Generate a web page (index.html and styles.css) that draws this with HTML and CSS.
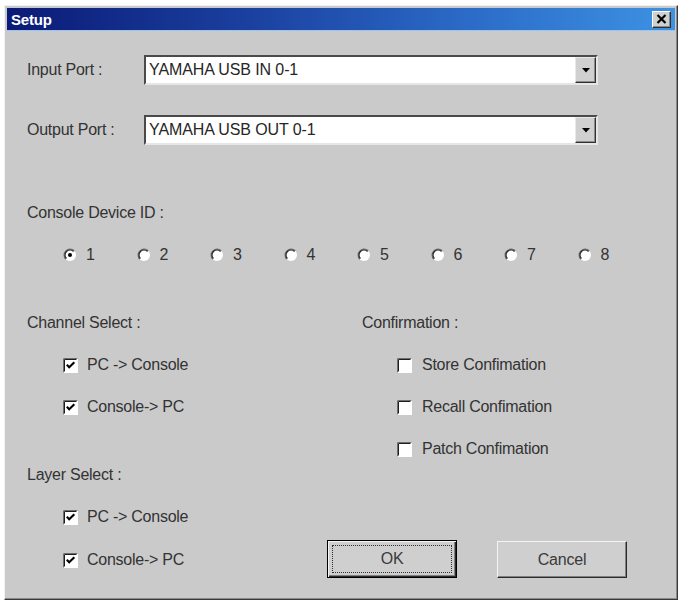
FILE: index.html
```html
<!DOCTYPE html>
<html>
<head>
<meta charset="utf-8">
<link rel="stylesheet" href="styles.css">
</head>
<body>
<div class="window">
  <div class="titlebar">
    <span class="title">Setup</span>
    <span class="close"><svg width="11" height="10" viewBox="0 0 11 10"><path d="M1.5 1 L9.5 9 M9.5 1 L1.5 9" stroke="#000" stroke-width="2.2" fill="none"/></svg></span>
  </div>
  <div class="content">
    <div class="port-row first">
      <span class="label port-label">Input Port :</span>
      <div class="combo">
        <span class="combo-text">YAMAHA USB IN 0-1</span>
        <span class="drop"><svg width="8" height="5" viewBox="0 0 8 5"><polygon points="0,0 8,0 4,4.5" fill="#000"/></svg></span>
      </div>
    </div>
    <div class="port-row second">
      <span class="label port-label">Output Port :</span>
      <div class="combo">
        <span class="combo-text">YAMAHA USB OUT 0-1</span>
        <span class="drop"><svg width="8" height="5" viewBox="0 0 8 5"><polygon points="0,0 8,0 4,4.5" fill="#000"/></svg></span>
      </div>
    </div>

    <div class="label device-label">Console Device ID :</div>
    <div class="radios">
      <span class="radio"><svg width="14" height="14" viewBox="0 0 14 14"><circle cx="7" cy="7" r="6" fill="#fff"/><path d="M2.76 11.24 A6 6 0 0 1 11.24 2.76" stroke="#6e6e6e" stroke-width="1.2" fill="none"/><path d="M3.46 10.54 A5 5 0 0 1 10.54 3.46" stroke="#262626" stroke-width="1.2" fill="none"/><circle cx="7" cy="7" r="2" fill="#000"/></svg><span class="rlabel">1</span></span>
      <span class="radio"><svg width="14" height="14" viewBox="0 0 14 14"><circle cx="7" cy="7" r="6" fill="#fff"/><path d="M2.76 11.24 A6 6 0 0 1 11.24 2.76" stroke="#6e6e6e" stroke-width="1.2" fill="none"/><path d="M3.46 10.54 A5 5 0 0 1 10.54 3.46" stroke="#262626" stroke-width="1.2" fill="none"/></svg><span class="rlabel">2</span></span>
      <span class="radio"><svg width="14" height="14" viewBox="0 0 14 14"><circle cx="7" cy="7" r="6" fill="#fff"/><path d="M2.76 11.24 A6 6 0 0 1 11.24 2.76" stroke="#6e6e6e" stroke-width="1.2" fill="none"/><path d="M3.46 10.54 A5 5 0 0 1 10.54 3.46" stroke="#262626" stroke-width="1.2" fill="none"/></svg><span class="rlabel">3</span></span>
      <span class="radio"><svg width="14" height="14" viewBox="0 0 14 14"><circle cx="7" cy="7" r="6" fill="#fff"/><path d="M2.76 11.24 A6 6 0 0 1 11.24 2.76" stroke="#6e6e6e" stroke-width="1.2" fill="none"/><path d="M3.46 10.54 A5 5 0 0 1 10.54 3.46" stroke="#262626" stroke-width="1.2" fill="none"/></svg><span class="rlabel">4</span></span>
      <span class="radio"><svg width="14" height="14" viewBox="0 0 14 14"><circle cx="7" cy="7" r="6" fill="#fff"/><path d="M2.76 11.24 A6 6 0 0 1 11.24 2.76" stroke="#6e6e6e" stroke-width="1.2" fill="none"/><path d="M3.46 10.54 A5 5 0 0 1 10.54 3.46" stroke="#262626" stroke-width="1.2" fill="none"/></svg><span class="rlabel">5</span></span>
      <span class="radio"><svg width="14" height="14" viewBox="0 0 14 14"><circle cx="7" cy="7" r="6" fill="#fff"/><path d="M2.76 11.24 A6 6 0 0 1 11.24 2.76" stroke="#6e6e6e" stroke-width="1.2" fill="none"/><path d="M3.46 10.54 A5 5 0 0 1 10.54 3.46" stroke="#262626" stroke-width="1.2" fill="none"/></svg><span class="rlabel">6</span></span>
      <span class="radio"><svg width="14" height="14" viewBox="0 0 14 14"><circle cx="7" cy="7" r="6" fill="#fff"/><path d="M2.76 11.24 A6 6 0 0 1 11.24 2.76" stroke="#6e6e6e" stroke-width="1.2" fill="none"/><path d="M3.46 10.54 A5 5 0 0 1 10.54 3.46" stroke="#262626" stroke-width="1.2" fill="none"/></svg><span class="rlabel">7</span></span>
      <span class="radio"><svg width="14" height="14" viewBox="0 0 14 14"><circle cx="7" cy="7" r="6" fill="#fff"/><path d="M2.76 11.24 A6 6 0 0 1 11.24 2.76" stroke="#6e6e6e" stroke-width="1.2" fill="none"/><path d="M3.46 10.54 A5 5 0 0 1 10.54 3.46" stroke="#262626" stroke-width="1.2" fill="none"/></svg><span class="rlabel">8</span></span>
    </div>

    <div class="lower">
      <div class="left-col">
        <div class="label group-label">Channel Select :</div>
        <div class="check"><svg class="box" width="15" height="15" viewBox="0 0 15 15"><rect x="0" y="0" width="15" height="15" fill="#fff"/><path d="M0.5 14.5 V0.5 H14.5" stroke="#6e6e6e" fill="none"/><path d="M1.5 13.5 V1.5 H13.5" stroke="#1e1e1e" fill="none"/><path d="M3.8 6.8 L6.2 9.3 L11.3 4.2" stroke="#000" stroke-width="2.1" fill="none"/></svg><span class="clabel">PC -&gt; Console</span></div>
        <div class="check"><svg class="box" width="15" height="15" viewBox="0 0 15 15"><rect x="0" y="0" width="15" height="15" fill="#fff"/><path d="M0.5 14.5 V0.5 H14.5" stroke="#6e6e6e" fill="none"/><path d="M1.5 13.5 V1.5 H13.5" stroke="#1e1e1e" fill="none"/><path d="M3.8 6.8 L6.2 9.3 L11.3 4.2" stroke="#000" stroke-width="2.1" fill="none"/></svg><span class="clabel">Console-&gt; PC</span></div>
        <div class="label group-label layer">Layer Select :</div>
        <div class="check"><svg class="box" width="15" height="15" viewBox="0 0 15 15"><rect x="0" y="0" width="15" height="15" fill="#fff"/><path d="M0.5 14.5 V0.5 H14.5" stroke="#6e6e6e" fill="none"/><path d="M1.5 13.5 V1.5 H13.5" stroke="#1e1e1e" fill="none"/><path d="M3.8 6.8 L6.2 9.3 L11.3 4.2" stroke="#000" stroke-width="2.1" fill="none"/></svg><span class="clabel">PC -&gt; Console</span></div>
        <div class="check last"><svg class="box" width="15" height="15" viewBox="0 0 15 15"><rect x="0" y="0" width="15" height="15" fill="#fff"/><path d="M0.5 14.5 V0.5 H14.5" stroke="#6e6e6e" fill="none"/><path d="M1.5 13.5 V1.5 H13.5" stroke="#1e1e1e" fill="none"/><path d="M3.8 6.8 L6.2 9.3 L11.3 4.2" stroke="#000" stroke-width="2.1" fill="none"/></svg><span class="clabel">Console-&gt; PC</span></div>
      </div>
      <div class="right-col">
        <div class="label group-label conf">Confirmation :</div>
        <div class="check rcheck"><svg class="box" width="15" height="15" viewBox="0 0 15 15"><rect x="0" y="0" width="15" height="15" fill="#fff"/><path d="M0.5 14.5 V0.5 H14.5" stroke="#6e6e6e" fill="none"/><path d="M1.5 13.5 V1.5 H13.5" stroke="#1e1e1e" fill="none"/></svg><span class="clabel">Store Confimation</span></div>
        <div class="check rcheck"><svg class="box" width="15" height="15" viewBox="0 0 15 15"><rect x="0" y="0" width="15" height="15" fill="#fff"/><path d="M0.5 14.5 V0.5 H14.5" stroke="#6e6e6e" fill="none"/><path d="M1.5 13.5 V1.5 H13.5" stroke="#1e1e1e" fill="none"/></svg><span class="clabel">Recall Confimation</span></div>
        <div class="check rcheck"><svg class="box" width="15" height="15" viewBox="0 0 15 15"><rect x="0" y="0" width="15" height="15" fill="#fff"/><path d="M0.5 14.5 V0.5 H14.5" stroke="#6e6e6e" fill="none"/><path d="M1.5 13.5 V1.5 H13.5" stroke="#1e1e1e" fill="none"/></svg><span class="clabel">Patch Confimation</span></div>
        <div class="buttons">
          <button class="btn ok">OK</button>
          <button class="btn cancel">Cancel</button>
        </div>
      </div>
    </div>
  </div>
</div>
</body>
</html>
```
FILE: styles.css
```css
html, body {
  margin: 0;
  padding: 0;
  background: #ffffff;
}
body {
  font-family: "Liberation Sans", Arial, sans-serif;
}
.window {
  margin: 5px 0 0 4px;
  width: 674px;
  height: 595px;
  box-sizing: border-box;
  background: #cacaca;
  border: 1px solid;
  border-color: #f2f2f2 #3a3a3a #3a3a3a #f2f2f2;
  box-shadow: inset -1px -1px 0 #8a8a8a;
  padding: 2px;
  display: flex;
  flex-direction: column;
}
.titlebar {
  height: 23px;
  flex: none;
  background: linear-gradient(to right, #0b1a76 0%, #1a3f9e 35%, #2c6cc8 70%, #3d92e2 100%);
  border-bottom: 1px solid #9cc4ee;
  box-sizing: border-box;
  display: flex;
  align-items: center;
  justify-content: space-between;
  padding: 0 4px 0 4px;
}
.title {
  color: #ffffff;
  font-weight: bold;
  font-size: 15px;
  letter-spacing: -0.2px;
}
.close {
  width: 19px;
  height: 17px;
  box-sizing: border-box;
  background: #d0d0d0;
  border: 1px solid;
  border-color: #ffffff #303030 #303030 #ffffff;
  box-shadow: inset -1px -1px 0 #8a8a8a;
  display: flex;
  align-items: center;
  justify-content: center;
}
.content {
  flex: 1;
  color: #333333;
  font-size: 16px;
  letter-spacing: -0.25px;
}
.label {
  line-height: 20px;
  height: 20px;
}
.port-row {
  display: flex;
  align-items: center;
  padding-left: 20px;
}
.port-row.first {
  margin-top: 24px;
}
.port-row.second {
  margin-top: 30px;
}
.port-label {
  width: 117px;
  flex: none;
}
.combo {
  width: 454px;
  height: 30px;
  box-sizing: border-box;
  background: #ffffff;
  border: 2px solid;
  border-color: #4a4a4a #e6e6e6 #e6e6e6 #4a4a4a;
  display: flex;
  align-items: center;
  justify-content: space-between;
}
.combo-text {
  padding-left: 3px;
  color: #262626;
  letter-spacing: -0.1px;
}
.drop {
  width: 21px;
  height: 26px;
  box-sizing: border-box;
  background: #d0d0d0;
  border: 1px solid;
  border-color: #e8e8e8 #303030 #303030 #e8e8e8;
  box-shadow: inset -1px -1px 0 #8a8a8a;
  display: flex;
  align-items: center;
  justify-content: center;
}
.device-label {
  margin-top: 58px;
  padding-left: 20px;
}
.radios {
  margin-top: 22px;
  padding-left: 56px;
  height: 20px;
  display: grid;
  grid-template-columns: repeat(8, 73.5px);
  align-items: center;
}
.radio {
  display: flex;
  align-items: center;
}
.radio svg {
  display: block;
  flex: none;
}
.rlabel {
  margin-left: 9px;
}
.lower {
  margin-top: 48px;
  display: grid;
  grid-template-columns: 320px 1fr;
}
.left-col {
  padding-left: 20px;
}
.group-label.layer {
  margin-top: 48px;
}
.check {
  height: 20px;
  margin-top: 22px;
  display: flex;
  align-items: center;
  padding-left: 36px;
}
.check.last {
  margin-top: 23px;
}
.check .box {
  display: block;
  flex: none;
}
.clabel {
  margin-left: 9px;
}
.conf {
  padding-left: 35px;
}
.check.rcheck {
  padding-left: 70px;
}
.check.rcheck .clabel {
  margin-left: 10px;
}
.buttons {
  margin-top: 81px;
  display: flex;
  gap: 40px;
}
.btn {
  width: 130px;
  height: 38px;
  box-sizing: border-box;
  background: #cfcfcf;
  font-family: "Liberation Sans", Arial, sans-serif;
  font-size: 16px;
  color: #3a3a3a;
  letter-spacing: -0.2px;
  padding: 0;
  margin: 0;
}
.btn.ok {
  border: 1px solid #000000;
  box-shadow: inset 1px 1px 0 #f4f4f4, inset -1px -1px 0 #2a2a2a, inset -2px -2px 0 #808080;
  outline: 1px dotted #303030;
  outline-offset: -6px;
}
.btn.cancel {
  height: 37px;
  margin-top: 1px;
  border: 1px solid;
  border-color: #f4f4f4 #2a2a2a #2a2a2a #f4f4f4;
  box-shadow: inset -1px -1px 0 #808080;
}
```
